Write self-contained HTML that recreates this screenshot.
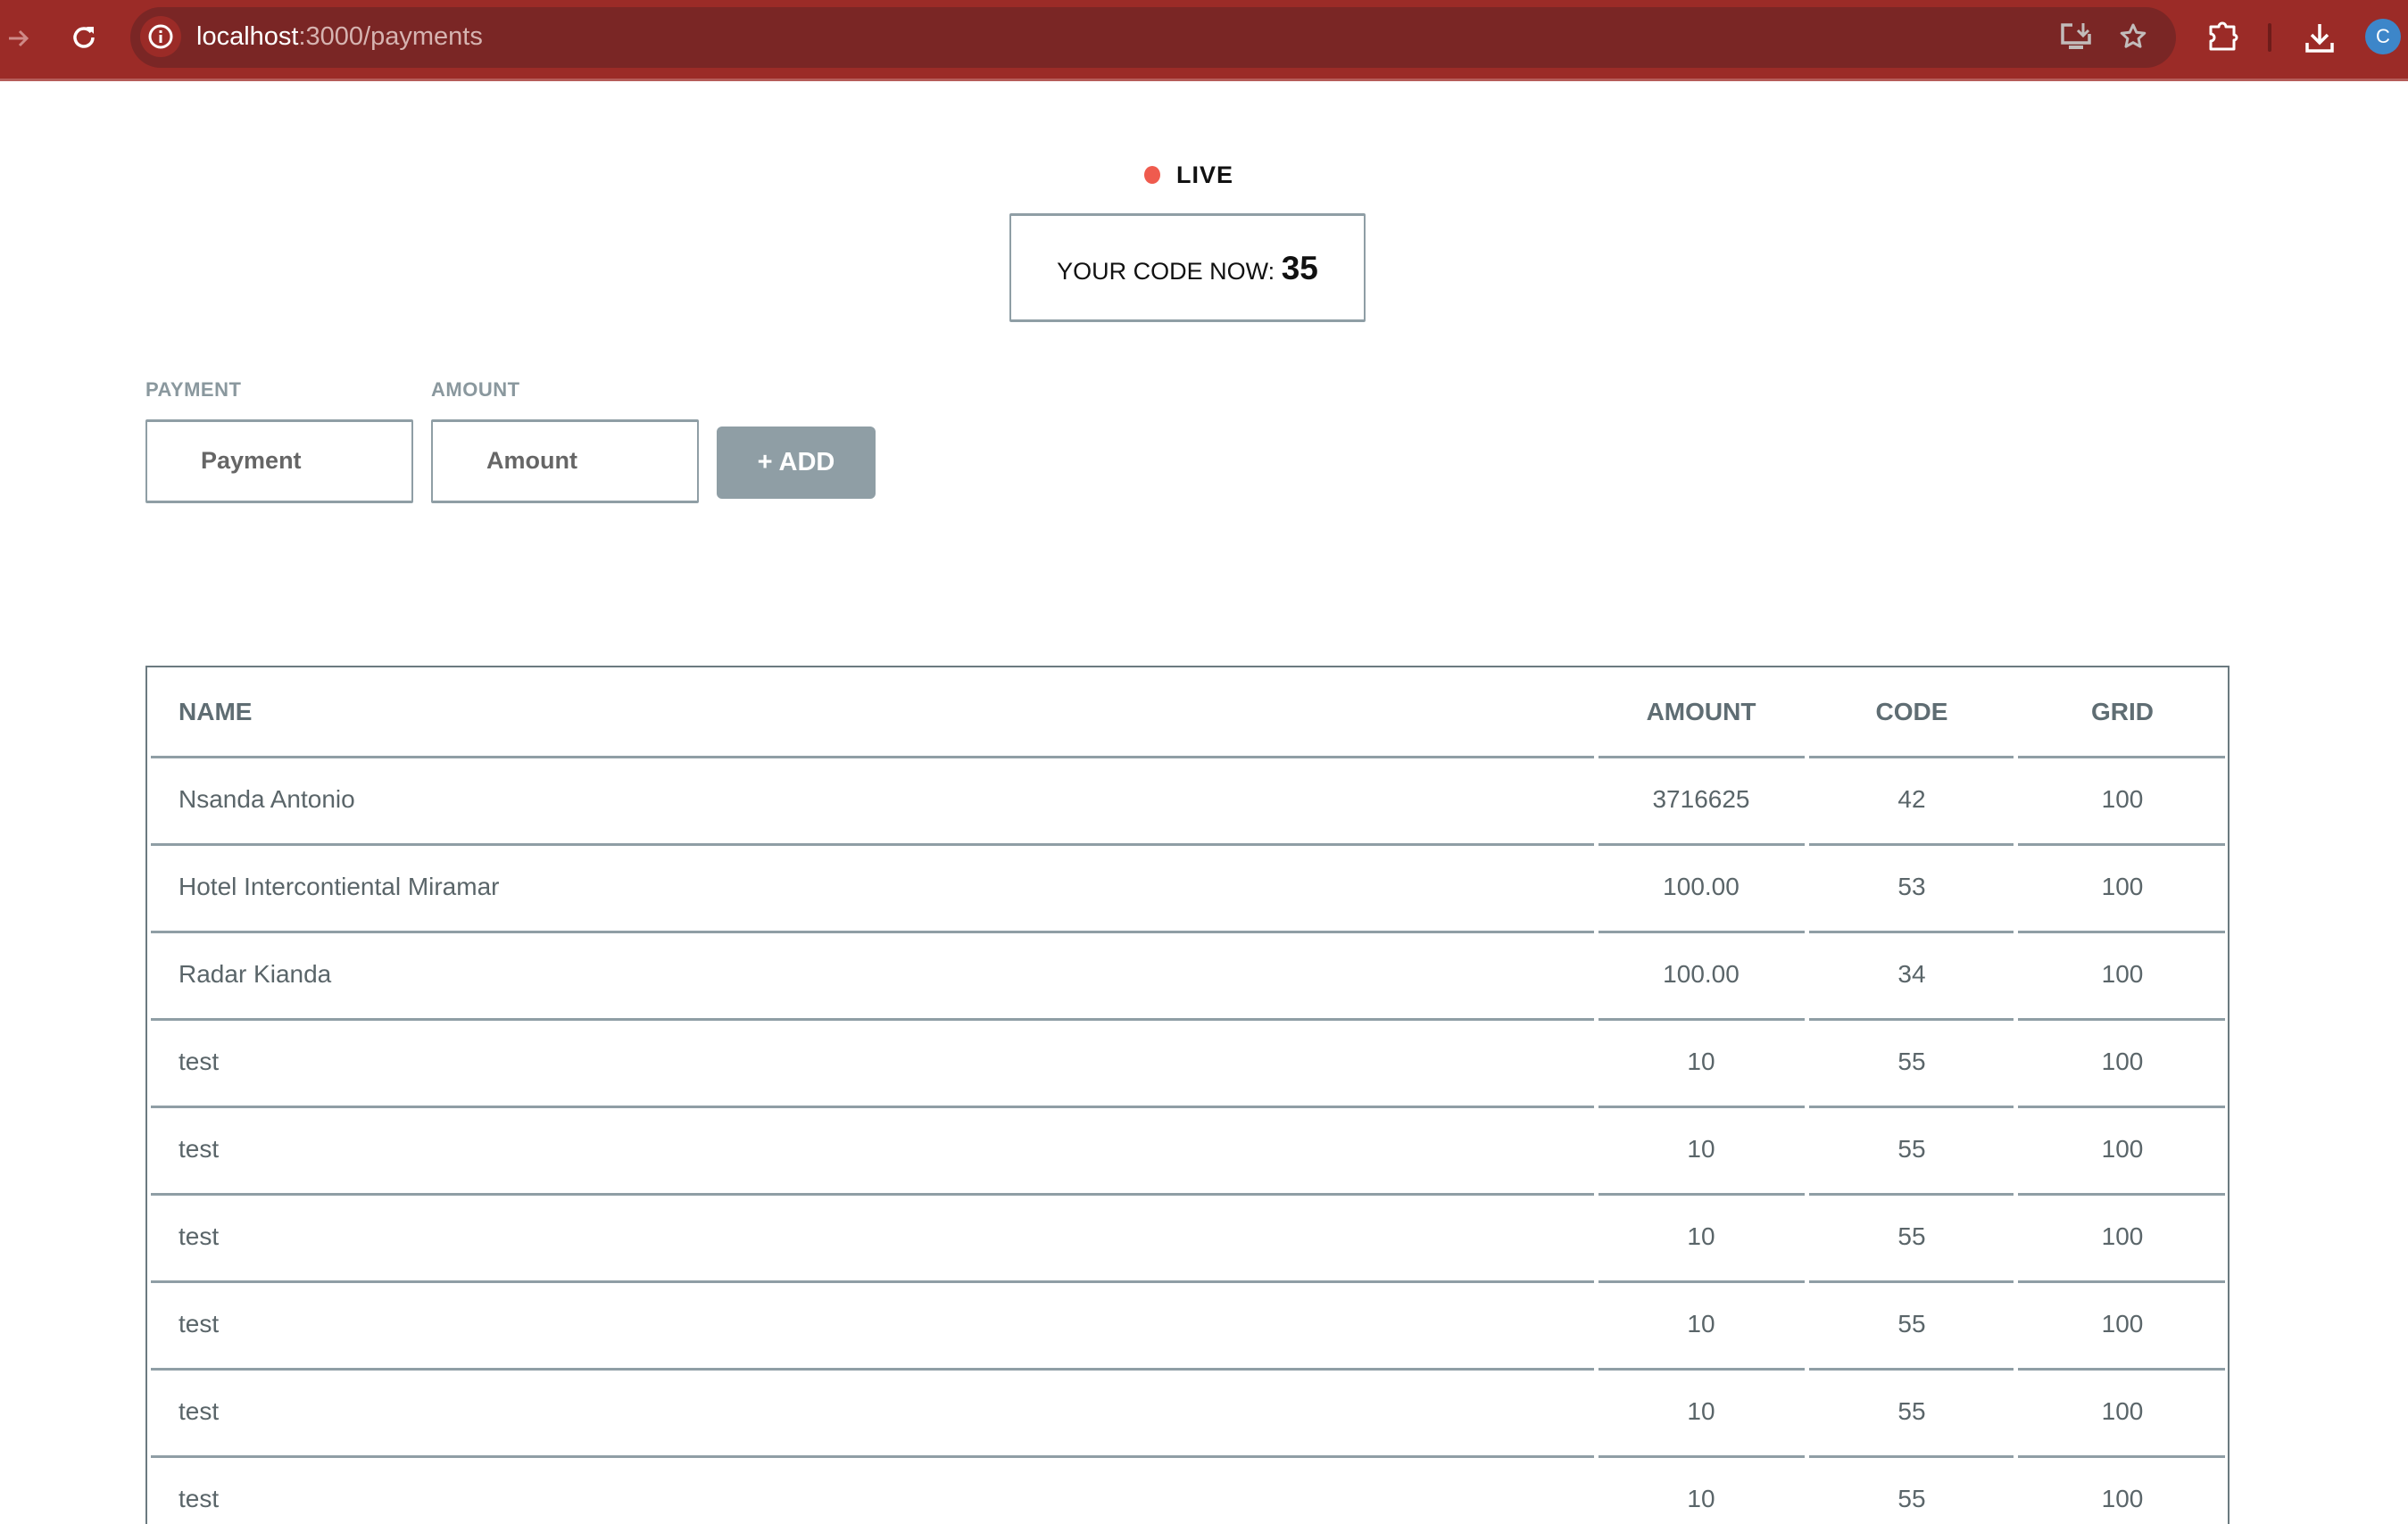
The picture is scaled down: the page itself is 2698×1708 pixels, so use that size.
<!DOCTYPE html>
<html style="overflow:hidden;height:1708px"><head><meta charset="utf-8"><style>
*{margin:0;padding:0;box-sizing:border-box}
body{width:2698px;height:1708px;overflow:hidden;background:#fff;font-family:"Liberation Sans",Arial,sans-serif;position:relative}
.a{position:absolute}
.bar{left:0;top:0;width:2698px;height:88px;background:#9b2b27}
.strip{left:0;top:88px;width:2698px;height:3px;background:#b55d5a}
.omni{left:146px;top:8px;width:2292px;height:68px;background:#7a2625;border-radius:34px}
.url{left:220px;top:24px;font-size:29px;color:#fff;line-height:34px}
.url span{color:#d6b3b0}
.lbl{font-size:22px;font-weight:bold;color:#8a989e;letter-spacing:.5px}
.inp{border:2px solid #8f9ea5;border-top-width:3px;border-bottom-width:3px;border-radius:2px;background:#fff;height:94px;width:300px}
.ph{font-size:27px;font-weight:bold;color:#666;position:absolute;top:28px}
.line{height:3px;background:#8f9ea5}
.t{font-size:28px;color:#5a6569;line-height:32px}
.h{font-weight:bold;color:#5f6d73}
.c{text-align:center;width:300px}
</style></head><body>
<div class="a bar"></div>
<div class="a strip"></div>
<div class="a omni"></div>
<svg class="a" style="left:6px;top:28px" width="30" height="30" viewBox="0 0 30 30"><path d="M4 15h20M16 7l8 8-8 8" stroke="#cf8a87" stroke-width="3" fill="none"/></svg>
<svg class="a" style="left:78px;top:25px" width="32" height="32" viewBox="0 0 32 32"><path d="M24 11A10 10 0 1 0 26 17" stroke="#fff" stroke-width="3.5" fill="none"/><path d="M19 5h8v8z" fill="#fff"/></svg>
<div class="a" style="left:157px;top:18px;width:46px;height:46px;border-radius:23px;background:#9b2b27"></div>
<svg class="a" style="left:164px;top:25px" width="32" height="32" viewBox="0 0 32 32"><circle cx="16" cy="16" r="12" stroke="#fff" stroke-width="3" fill="none"/><rect x="14.5" y="14" width="3" height="9" fill="#fff"/><rect x="14.5" y="9" width="3" height="3" fill="#fff"/></svg>
<div class="a url">localhost<span>:3000/payments</span></div>
<svg class="a" style="left:2308px;top:24px" width="36" height="34" viewBox="0 0 36 34"><path d="M14 4H3v20h30V14" stroke="#c2bcbb" stroke-width="3.5" fill="none"/><rect x="10" y="27" width="16" height="4" fill="#c2bcbb"/><path d="M26 2v13M20 10l6 6 6-6" stroke="#c2bcbb" stroke-width="3" fill="none"/></svg>
<svg class="a" style="left:2374px;top:25px" width="32" height="32" viewBox="0 0 32 32"><path d="M16 3l3.8 8.2 9 1-6.7 6.1 1.9 8.9L16 22.7l-8 4.5 1.9-8.9L3.2 12.2l9-1z" stroke="#c2bcbb" stroke-width="3" fill="none" stroke-linejoin="round"/></svg>
<svg class="a" style="left:2474px;top:22px" width="34" height="36" viewBox="0 0 34 36"><path d="M3 8h9a4 4 0 0 1 8 0h9v9a3 3 0 0 1 0 6v10H3v-9a4 4 0 0 0 0-8z" stroke="#fff" stroke-width="3" fill="none" stroke-linejoin="round"/></svg>
<div class="a" style="left:2541px;top:26px;width:4px;height:32px;background:#6e1c1a;border-radius:2px"></div>
<svg class="a" style="left:2582px;top:24px" width="34" height="36" viewBox="0 0 34 36"><path d="M17 3v20M8 15l9 9 9-9" stroke="#fff" stroke-width="3.5" fill="none"/><path d="M3 24v9h28v-9" stroke="#fff" stroke-width="3.5" fill="none"/></svg>
<div class="a" style="left:2650px;top:21px;width:40px;height:40px;border-radius:20px;background:#3d86c9;color:#fff;font-size:22px;text-align:center;line-height:40px">C</div>

<div class="a" style="left:1282px;top:186px;width:18px;height:20px;border-radius:50%;background:#ef5b4e"></div>
<div class="a" style="left:1318px;top:180px;font-size:27px;font-weight:bold;color:#111;line-height:32px;letter-spacing:1px">LIVE</div>
<div class="a" style="left:1131px;top:239px;width:399px;height:122px;border:2px solid #8f9ea5;border-top-width:3px;border-bottom-width:3px;border-radius:2px"></div>
<div class="a" style="left:1131px;top:281px;width:399px;text-align:center;font-size:27px;color:#111;line-height:40px">YOUR CODE NOW: <b style="font-size:37px">35</b></div>

<div class="a lbl" style="left:163px;top:424px">PAYMENT</div>
<div class="a lbl" style="left:483px;top:424px">AMOUNT</div>
<div class="a inp" style="left:163px;top:470px"><span class="ph" style="left:60px">Payment</span></div>
<div class="a inp" style="left:483px;top:470px"><span class="ph" style="left:60px">Amount</span></div>
<div class="a" style="left:803px;top:478px;width:178px;height:81px;background:#8f9ea5;border-radius:6px;color:#fff;font-size:29px;font-weight:bold;text-align:center;line-height:81px">+ ADD</div>

<div class="a" style="left:163px;top:746px;width:2335px;height:962px;border:2px solid #6b7a80;border-bottom:none"></div>
<div class="a t h" style="left:200px;top:782px">NAME</div>
<div class="a t h c" style="left:1756px;top:782px">AMOUNT</div>
<div class="a t h c" style="left:1992px;top:782px">CODE</div>
<div class="a t h c" style="left:2228px;top:782px">GRID</div>

<div id="rows"></div>
<script>
var data=[["Nsanda Antonio","3716625","42","100"],["Hotel Intercontiental Miramar","100.00","53","100"],["Radar Kianda","100.00","34","100"]];
for(var i=0;i<6;i++)data.push(["test","10","55","100"]);
var h="",segs=[[169,1786],[1791,2022],[2027,2256],[2261,2493]];
for(var i=0;i<9;i++){var y=847+i*98;
segs.forEach(function(s){h+='<div class="a line" style="left:'+s[0]+'px;top:'+y+'px;width:'+(s[1]-s[0])+'px"></div>';});
var d=data[i],ty=y+33;
h+='<div class="a t" style="left:200px;top:'+ty+'px">'+d[0]+'</div>';
h+='<div class="a t c" style="left:1756px;top:'+ty+'px">'+d[1]+'</div>';
h+='<div class="a t c" style="left:1992px;top:'+ty+'px">'+d[2]+'</div>';
h+='<div class="a t c" style="left:2228px;top:'+ty+'px">'+d[3]+'</div>';}
document.getElementById("rows").innerHTML=h;
</script>
</body></html>
